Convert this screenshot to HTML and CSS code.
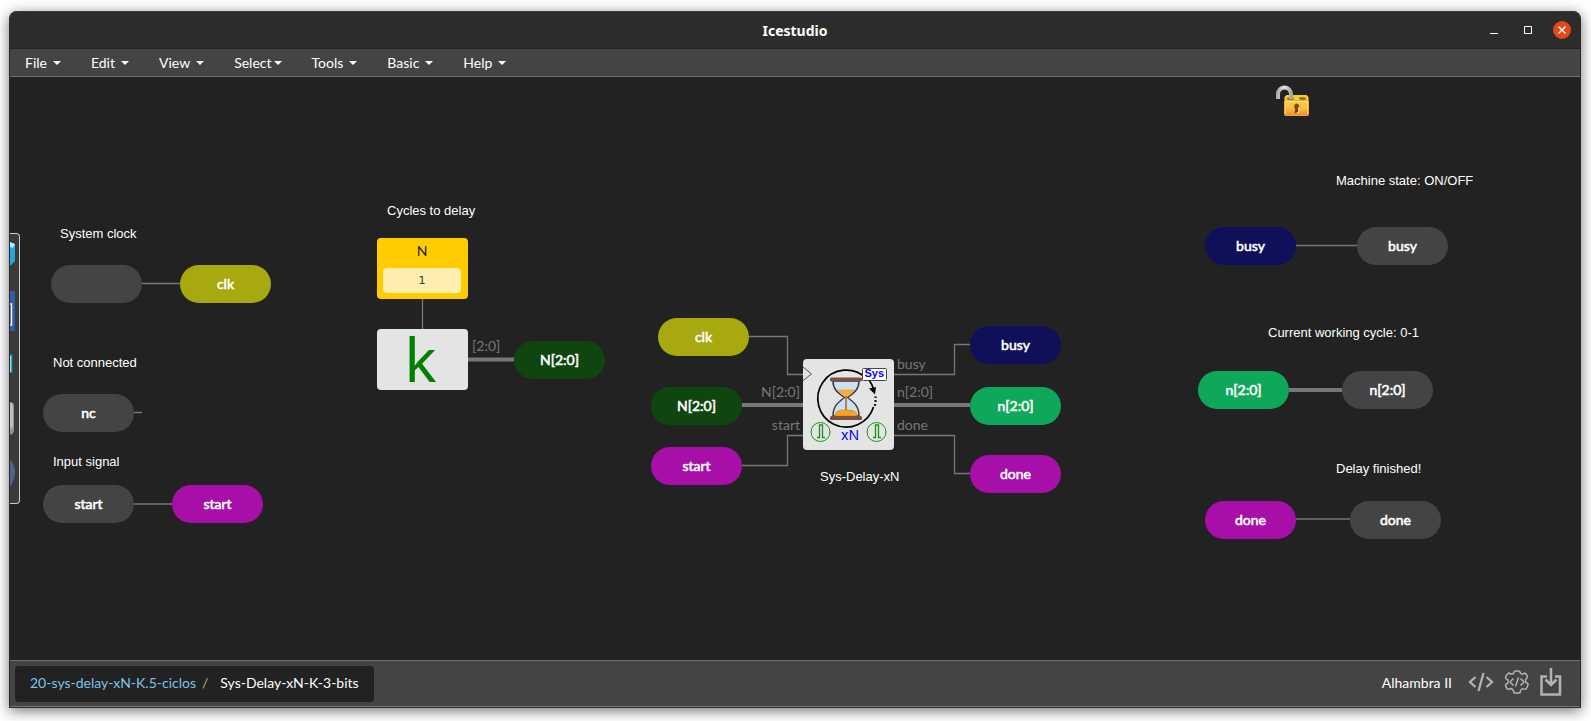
FILE: index.html
```html
<!DOCTYPE html>
<html lang="en">
<head>
<meta charset="utf-8">
<title>Icestudio</title>
<link rel="stylesheet" href="styles.css">
</head>
<body>
<div class="window">
  <header class="titlebar">
    <h1 class="title">Icestudio</h1>
    <div class="controls">
      <button class="control" type="button" aria-label="Minimize"><svg width="8" height="10" viewBox="0 0 8 10"><path d="M0 8.5h8" stroke="#fff"/></svg></button>
      <button class="control" type="button" aria-label="Maximize"><svg width="8" height="8" viewBox="0 0 8 8"><path d="M.5.5h7v7h-7z" fill="none" stroke="#fff"/></svg></button>
      <button class="control close" type="button" aria-label="Close"><svg width="8" height="8" viewBox="0 0 8 8"><path d="M.5.5l7 7M7.5.5l-7 7" stroke="#fff" stroke-width="1.3"/></svg></button>
    </div>
  </header>
  <nav class="menubar">
    <button class="menu" type="button">File<span class="caret"></span></button>
    <button class="menu" type="button">Edit<span class="caret"></span></button>
    <button class="menu" type="button">View<span class="caret"></span></button>
    <button class="menu tight" type="button">Select<span class="caret"></span></button>
    <button class="menu" type="button">Tools<span class="caret"></span></button>
    <button class="menu" type="button">Basic<span class="caret"></span></button>
    <button class="menu" type="button">Help<span class="caret"></span></button>
  </nav>

  <main class="canvas">
    <svg class="wires" width="1571" height="583" viewBox="0 0 1571 583">
      <g class="wire">
        <path d="M131 206.500h40M123 335.500h9M123 427h40M412.500 222v30"/>
        <path d="M739 259.500h38.500v38h16M732 388.500h45.500v-30h16"/>
        <path d="M884 297.500h60.500v-30h16M884 358.500h60.500v38h16"/>
        <path d="M1286 168.500h61M1286 442h54"/>
      </g>
      <g class="bus">
        <path d="M458 282.500h46M732 328h61M884 328h76M1279 313h53"/>
      </g>
    </svg>

    <aside class="toolbox">
      <svg width="9" height="269" viewBox="0 0 9 269">
        <path d="M0 8l5 2v17l-5 5z" fill="#27a5dc"/><path d="M0 8l5 2-2 4-3-1z" fill="#b6e8fa"/>
        <path d="M0 57h5v40h-5z" fill="#2f5da8"/><path d="M0 70h1.500v21h-1.500" fill="none" stroke="#eef2fa" stroke-width="1.500"/>
        <path d="M0 120h2.500v19h-2.500z" fill="#1e7f96"/><path d="M0 122h1.300v16h-1.300z" fill="#8fe6f0"/>
        <path d="M0 168q4 0 4 4v24q0 4-4 5z" fill="#96938c"/><path d="M0 169q3 0 3 3v20l-3 4z" fill="#c0beb8"/>
        <path d="M0 225q5 6 5 13t-5 15z" fill="#4c6390"/>
      </svg>
    </aside>

    <svg class="lock" width="34" height="34" viewBox="0 0 34 34" role="img" aria-label="Unlocked">
      <defs>
        <linearGradient id="gold" x1="0" y1="0" x2="0" y2="1"><stop offset="0" stop-color="#f5cf3a"/><stop offset=".5" stop-color="#f8c245"/><stop offset="1" stop-color="#f08a34"/></linearGradient>
        <linearGradient id="steel" x1="0" y1="0" x2="1" y2="0"><stop offset="0" stop-color="#aeb1b4"/><stop offset=".5" stop-color="#e2e3e5"/><stop offset="1" stop-color="#a3a6aa"/></linearGradient>
      </defs>
      <path d="M9.500 12l2-2h20l2 2v5h-24z" fill="#f6cb34"/>
      <ellipse cx="15.500" cy="13.500" rx="3.500" ry="1.300" fill="#8a5d08"/>
      <ellipse cx="27.500" cy="13.500" rx="3.500" ry="1.300" fill="#8a5d08"/>
      <path d="M3 14V9a6.500 6.500 0 0 1 13 0v5" fill="none" stroke="url(#steel)" stroke-width="4"/>
      <rect x="9.500" y="15.500" width="24" height="15" rx="1" fill="url(#gold)" stroke="#f5a72c"/>
      <path d="M10.500 16.500h22" stroke="#fbe88a"/>
      <path d="M10.500 17v12.500M32.500 17v12.500" stroke="#fbe08a" stroke-opacity=".6"/>
      <path d="M21.500 18.500a3 3 0 0 1 1.800 5.200l.5 4.300h-4.200l.5-4.300a3 3 0 0 1 1.400-5.200z" fill="#7a4a10"/>
      <path d="M23.800 22v5.500h-2" fill="none" stroke="#fbe6a0"/>
    </svg>

    <span class="note n-clock">System clock</span>
    <div class="pin p-in-clk"></div>
    <div class="pin p-clk olive">clk</div>
    <span class="note n-nc">Not connected</span>
    <div class="pin p-nc">nc</div>
    <span class="note n-input">Input signal</span>
    <div class="pin p-in-start">start</div>
    <div class="pin p-start magenta">start</div>

    <span class="note n-cycles">Cycles to delay</span>
    <div class="constant">
      <label for="const-n">N</label>
      <input id="const-n" type="text" value="1">
    </div>
    <div class="block block-k">k</div>
    <span class="port port-k">[2:0]</span>
    <div class="pin p-n forest">N[2:0]</div>

    <div class="pin p-clk-out olive">clk</div>
    <div class="pin p-n-out forest">N[2:0]</div>
    <div class="pin p-start-out magenta">start</div>
    <span class="port port-left port-n-in">N[2:0]</span>
    <span class="port port-left port-start-in">start</span>
    <div class="block block-delay">
      <svg width="91" height="91" viewBox="0 0 91 91">
        <path d="M0 8l8.500 7L0 21.500" fill="none" stroke="#555"/>
        <path d="M70.500 48A28.500 28.500 0 1 1 63 19" fill="none" stroke="#000" stroke-width="1.700"/>
        <path d="M66 21q3 4 4.500 9" fill="none" stroke="#000" stroke-width="1.700"/>
        <path d="M66 29.500l7-1.500-1 7.500z"/>
        <path d="M72.500 37.500q.5 5-1 11" fill="none" stroke="#000" stroke-width="2.200" stroke-dasharray="1.700 2.200"/>
        <path d="M30 22h26c0 8-4 11-11.500 16.500C52 44 56 48 56 57H30c0-9 4-13 11.500-18.500C34 33 30 30 30 22z" fill="#c9e2f7" stroke="#3c3c40" stroke-width="1.500"/>
        <path d="M34 30.500h18q-2 3.500-8 7.500h-2q-6-4-8-7.500z" fill="#f9ab40"/>
        <path d="M32 57c0-5 4-6 11-6s11 1 11 6z" fill="#faa31c" stroke="#d77b10" stroke-width=".7"/>
        <path d="M43 37v14" stroke="#a5651e" stroke-width="1.500"/>
        <rect x="27" y="18.500" width="32" height="4" rx="1.500" fill="#7a5145"/>
        <rect x="27" y="57" width="32" height="4" rx="1.500" fill="#7a5145"/>
        <rect x="59.500" y="9.500" width="24" height="12" rx="1" fill="#fff" stroke="#444"/>
        <text class="tag" x="61.500" y="18">Sys</text>
        <text class="factor" x="38" y="81">xN</text>
        <g fill="none" stroke="#1a921a"><circle cx="17.500" cy="73" r="9.500"/><path d="M14 78.500h2.500v-12.500h3v12.500h2.500" stroke-width="1.300"/></g>
        <g fill="none" stroke="#1a921a"><circle cx="73.500" cy="73" r="9.500"/><path d="M70 78.500h2.500v-12.500h3v12.500h2.500" stroke-width="1.300"/></g>
      </svg>
    </div>
    <span class="port port-busy">busy</span>
    <span class="port port-n">n[2:0]</span>
    <span class="port port-done">done</span>
    <span class="note n-delay">Sys-Delay-xN</span>
    <div class="pin p-busy navy">busy</div>
    <div class="pin p-count green">n[2:0]</div>
    <div class="pin p-done magenta">done</div>

    <span class="note n-state">Machine state: ON/OFF</span>
    <div class="pin p-busy-in navy">busy</div>
    <div class="pin p-busy-end">busy</div>
    <span class="note n-cycle">Current working cycle: 0-1</span>
    <div class="pin p-count-in green">n[2:0]</div>
    <div class="pin p-count-end">n[2:0]</div>
    <span class="note n-finish">Delay finished!</span>
    <div class="pin p-done-in magenta">done</div>
    <div class="pin p-done-end">done</div>
  </main>

  <footer class="statusbar">
    <div class="breadcrumb">
      <a href="#main">20-sys-delay-xN-K.5-ciclos</a>
      <span class="slash">/</span>
      <span>Sys-Delay-xN-K-3-bits</span>
    </div>
    <div class="tools">
      <span class="board">Alhambra II</span>
      <button class="tool" type="button" aria-label="Verify"><svg width="26" height="20" viewBox="0 0 26 20"><path d="M7.500 5L2 10l5.500 5M18.500 5l5.500 5-5.500 5M15.500 1l-5 18" fill="none" stroke="#b3b3b3" stroke-width="2.300"/></svg></button>
      <button class="tool" type="button" aria-label="Build"><svg width="26" height="26" viewBox="0 0 26 26"><g fill="none" stroke="#b3b3b3" stroke-width="1.500" stroke-linejoin="round"><path d="M9.500 4.500Q10 2 11.500 2h3Q16 2 16.500 4.500q2 1.500 4-.5 2 1 3 3.500 0 1.500-2 3 0 2.500.500 3 2.500 1 2 2-.5 3-2 4.500-1.500.5-3-.5-2.500 1-2.500 2.500 0 2-1.500 2h-4q-1.500 0-1.500-2-.5-2-2.500-2.500-2 1-3.500.5Q2 18.500 1.500 16q0-1 2.500-2v-3Q1.500 10 1.500 8.500 2.500 5.500 4.500 4q2.500 1.500 5 .500z"/><path d="M9.500 9.500L6 13l3.500 3.500M16.500 9.500L20 13l-3.500 3.500M14.500 8.500l-3 9"/></g></svg></button>
      <button class="tool" type="button" aria-label="Upload"><svg width="22" height="28" viewBox="0 0 22 28"><path d="M7 8.500H1.500V26.500h18.500V8.500H15M11 0v16M5.500 11.500l5.500 5.500 5.500-5.500" fill="none" stroke="#b3b3b3" stroke-width="2.500"/></svg></button>
    </div>
  </footer>
</div>
</body>
</html>
```
FILE: styles.css
```css
* { box-sizing: border-box; }

body {
  margin: 0;
  min-height: 100vh;
  display: flex;
  padding: 11px 10px 13px 9px;
  background: #fff;
  font-family: Lato, sans-serif;
  font-size: 14px;
  line-height: 20px;
  color: #fff;
}

button {
  margin: 0;
  padding: 0;
  border: 0;
  background: none;
  color: inherit;
  font: inherit;
  cursor: pointer;
}

svg { display: block; }

.window {
  flex: 1;
  min-width: 0;
  display: flex;
  flex-direction: column;
  border: 1px solid #2a2a2a;
  border-top: 0;
  border-radius: 8px 8px 0 0;
  background: #222;
  box-shadow: 0 3px 14px rgba(0, 0, 0, .55);
}

.titlebar {
  display: grid;
  grid-template-columns: 1fr auto 1fr;
  align-items: center;
  height: 38px;
  border-top: 1px solid #3a3c3c;
  border-bottom: 1px solid #232323;
  border-radius: 8px 8px 0 0;
  background: #2c2c2c;
}

.title {
  grid-column: 2;
  margin: 0;
  font: bold 14px/22px "Noto Sans", sans-serif;
  padding-top: 2px;
}

.controls {
  display: flex;
  justify-content: flex-end;
  align-items: center;
  gap: 16px;
  padding-right: 9px;
}

.control {
  display: grid;
  place-items: center;
  width: 18px;
  height: 18px;
}

.close {
  border-radius: 50%;
  background: #e2491a;
}

.menubar {
  display: flex;
  height: 28px;
  border-bottom: 1px solid #707070;
  background: #444;
}

.menu {
  display: flex;
  align-items: center;
  gap: 6px;
  padding: 0 15px;
}

.menu.tight { gap: 2px; }

.caret {
  border: 4px solid transparent;
  border-top-color: #fff;
  border-bottom: 0;
}

.canvas {
  position: relative;
  flex: 1;
  overflow: hidden;
  background: #222;
}

.wires {
  position: absolute;
  left: 0;
  top: 0;
}

.wire { fill: none; stroke: #777; stroke-width: 1.3; }
.bus { fill: none; stroke: #777; stroke-width: 4; }

.toolbox {
  position: absolute;
  left: 0;
  top: 156px;
  border: 1px solid #ccc;
  border-left: 0;
  border-radius: 0 4px 4px 0;
  background: #3a3a3a;
}

.lock { position: absolute; left: 1265px; top: 8px; }

/* Pins use the regular weight thickened by an outline, so they keep its widths */
.pin {
  position: absolute;
  width: 91px;
  height: 38px;
  border-radius: 19px;
  background: #444;
  -webkit-text-stroke: .04em #fff;
  line-height: 38px;
  text-align: center;
}

.olive { background: #a8a80f; }
.magenta { background: #a80fa8; }
.forest { background: #0f460f; }
.navy { background: #0f0f5a; }
.green { background: #0fa85a; }

.p-in-clk { left: 41px; top: 188px; }
.p-clk { left: 170px; top: 188px; }
.p-nc { left: 33px; top: 317px; }
.p-in-start { left: 33px; top: 408px; }
.p-start { left: 162px; top: 408px; }
.p-n { left: 504px; top: 264px; }
.p-clk-out { left: 648px; top: 241px; }
.p-n-out { left: 641px; top: 310px; }
.p-start-out { left: 641px; top: 370px; }
.p-busy { left: 960px; top: 249px; }
.p-count { left: 960px; top: 310px; }
.p-done { left: 960px; top: 378px; }
.p-busy-in { left: 1195px; top: 150px; }
.p-busy-end { left: 1347px; top: 150px; }
.p-count-in { left: 1188px; top: 294px; }
.p-count-end { left: 1332px; top: 294px; }
.p-done-in { left: 1195px; top: 424px; }
.p-done-end { left: 1340px; top: 424px; }

.note {
  position: absolute;
  font-family: "Liberation Sans", Arial, sans-serif;
  font-size: 13px;
  line-height: 20px;
  white-space: nowrap;
}

.n-clock { left: 50px; top: 147px; }
.n-nc { left: 43px; top: 276px; }
.n-input { left: 43px; top: 375px; }
.n-cycles { left: 377px; top: 124px; }
.n-delay { left: 810px; top: 390px; }
.n-state { left: 1326px; top: 94px; }
.n-cycle { left: 1258px; top: 246px; }
.n-finish { left: 1326px; top: 382px; }

.port {
  position: absolute;
  color: #777;
  line-height: 20px;
}

.port-left { width: 80px; text-align: right; }
.port-k { left: 462px; top: 259px; }
.port-n-in { left: 710px; top: 305px; }
.port-start-in { left: 710px; top: 338px; }
.port-busy { left: 887px; top: 277px; }
.port-n { left: 887px; top: 305px; }
.port-done { left: 887px; top: 338px; }

.constant {
  position: absolute;
  left: 367px;
  top: 161px;
  width: 91px;
  height: 61px;
  padding: 3px 7px 6px 6px;
  display: flex;
  flex-direction: column;
  justify-content: space-between;
  border-radius: 4px;
  background: #fc0;
  color: #222;
  text-align: center;
}

.constant input {
  width: 100%;
  height: 25px;
  padding: 0;
  border: 0;
  border-radius: 4px;
  background: #ffeeaf;
  color: #333;
  font: 11px/25px "DejaVu Sans", sans-serif;
  text-align: center;
}

.block {
  position: absolute;
  border-radius: 4px;
  background: #e4e4e4;
}

.block-k {
  left: 367px;
  top: 252px;
  width: 91px;
  height: 61px;
  padding-right: 4px;
  color: #008000;
  font: 60px/61px "Noto Sans", sans-serif;
  text-align: center;
}

.block-delay { left: 793px; top: 282px; }

.tag {
  font: bold 11px "Liberation Sans", Arial, sans-serif;
  fill: #00f;
}

.factor {
  font: 14px "Noto Sans", sans-serif;
  fill: #00f;
}

.statusbar {
  display: flex;
  justify-content: space-between;
  align-items: center;
  height: 47px;
  padding: 0 18px 0 5px;
  border-top: 1px solid #707070;
  border-bottom: 1px solid #777;
  background: #444;
}

.breadcrumb {
  display: flex;
  gap: 6px;
  padding: 7px 15px 9px;
  border-radius: 4px;
  background: #222;
}

.breadcrumb a {
  color: #7cc4e8;
  text-decoration: none;
}

.slash { margin-right: 6px; color: #aaa; }

.tools {
  display: flex;
  align-items: center;
  gap: 10px;
  padding-bottom: 4px;
}

.board {
  margin-right: 6px;
  padding-top: 2px;
}
```
